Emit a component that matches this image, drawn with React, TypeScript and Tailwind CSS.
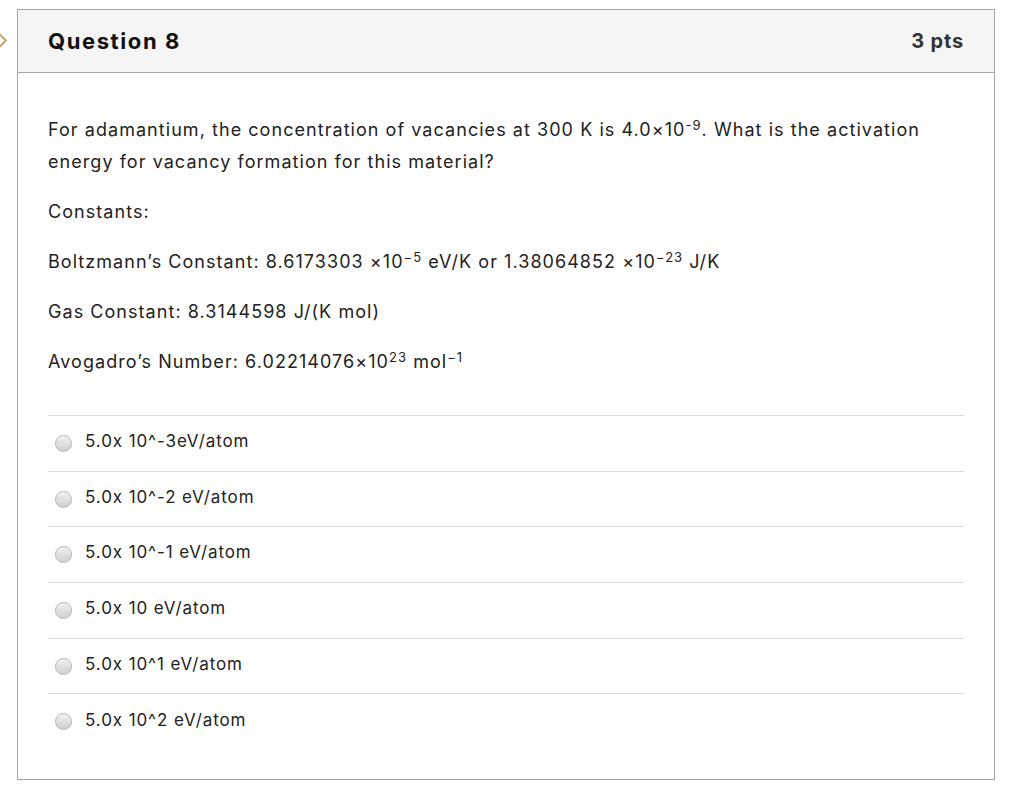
import React from "react";

const options = [
  "5.0x 10^-3eV/atom",
  "5.0x 10^-2 eV/atom",
  "5.0x 10^-1 eV/atom",
  "5.0x 10 eV/atom",
  "5.0x 10^1 eV/atom",
  "5.0x 10^2 eV/atom",
];

function Radio() {
  return (
    <span className="inline-block h-[17px] w-[17px] shrink-0 rounded-full border border-[#b5b5b5] bg-gradient-to-b from-[#f2f2f2] to-[#cfcfcf]" />
  );
}

export default function App() {
  return (
    <div className="relative h-[787px] w-[1024px] bg-white pt-[9px] pl-[17px] font-['Inter',sans-serif] text-[#2d3b45]">
      {/* little marker at left edge */}
      <div className="absolute left-[-6px] top-[35px] h-[11px] w-[11px] rotate-45 border-2 border-[#c9a56a] bg-white" />

      <div className="w-[978px] border border-[#a6a6a6] bg-white">
        <div className="flex h-[63px] items-center justify-between border-b border-[#a6a6a6] bg-[#f5f5f5] pl-[30px] pr-[30px]">
          <h2 className="text-[22px] font-bold tracking-[1.6px] text-[#111]">Question 8</h2>
          <span className="text-[20px] font-bold tracking-[0.8px] text-[#333]">3 pts</span>
        </div>

        <div className="px-[30px] pt-[41px] pb-[30px] text-[18px] tracking-[1.05px] text-[#222]">
          <p className="leading-[32px]">
            For adamantium, the concentration of vacancies at 300 K is 4.0×10
            <sup className="text-[13px] leading-none">-9</sup>. What is the activation energy for vacancy formation for this material?
          </p>
          <p className="mt-[18px] leading-[32px]">Constants:</p>
          <p className="mt-[18px] leading-[32px]">
            Boltzmann’s Constant: 8.6173303 ×10<sup className="text-[13px] leading-none">−5</sup> eV/K or 1.38064852 ×10
            <sup className="text-[13px] leading-none">−23</sup> J/K
          </p>
          <p className="mt-[18px] leading-[32px]">Gas Constant: 8.3144598 J/(K mol)</p>
          <p className="mt-[18px] leading-[32px]">
            Avogadro’s Number: 6.02214076×10<sup className="text-[13px] leading-none">23</sup> mol
            <sup className="text-[13px] leading-none">−1</sup>
          </p>

          <div className="mt-[37px]">
            {options.map((o) => (
              <div key={o} className="flex h-[55.7px] items-center gap-[13px] border-t border-[#d9d9d9] pl-[7px] text-[17px] tracking-[0.9px]">
                <Radio />
                <span className="-mt-[3px]">{o}</span>
              </div>
            ))}
          </div>
        </div>
      </div>
    </div>
  );
}
